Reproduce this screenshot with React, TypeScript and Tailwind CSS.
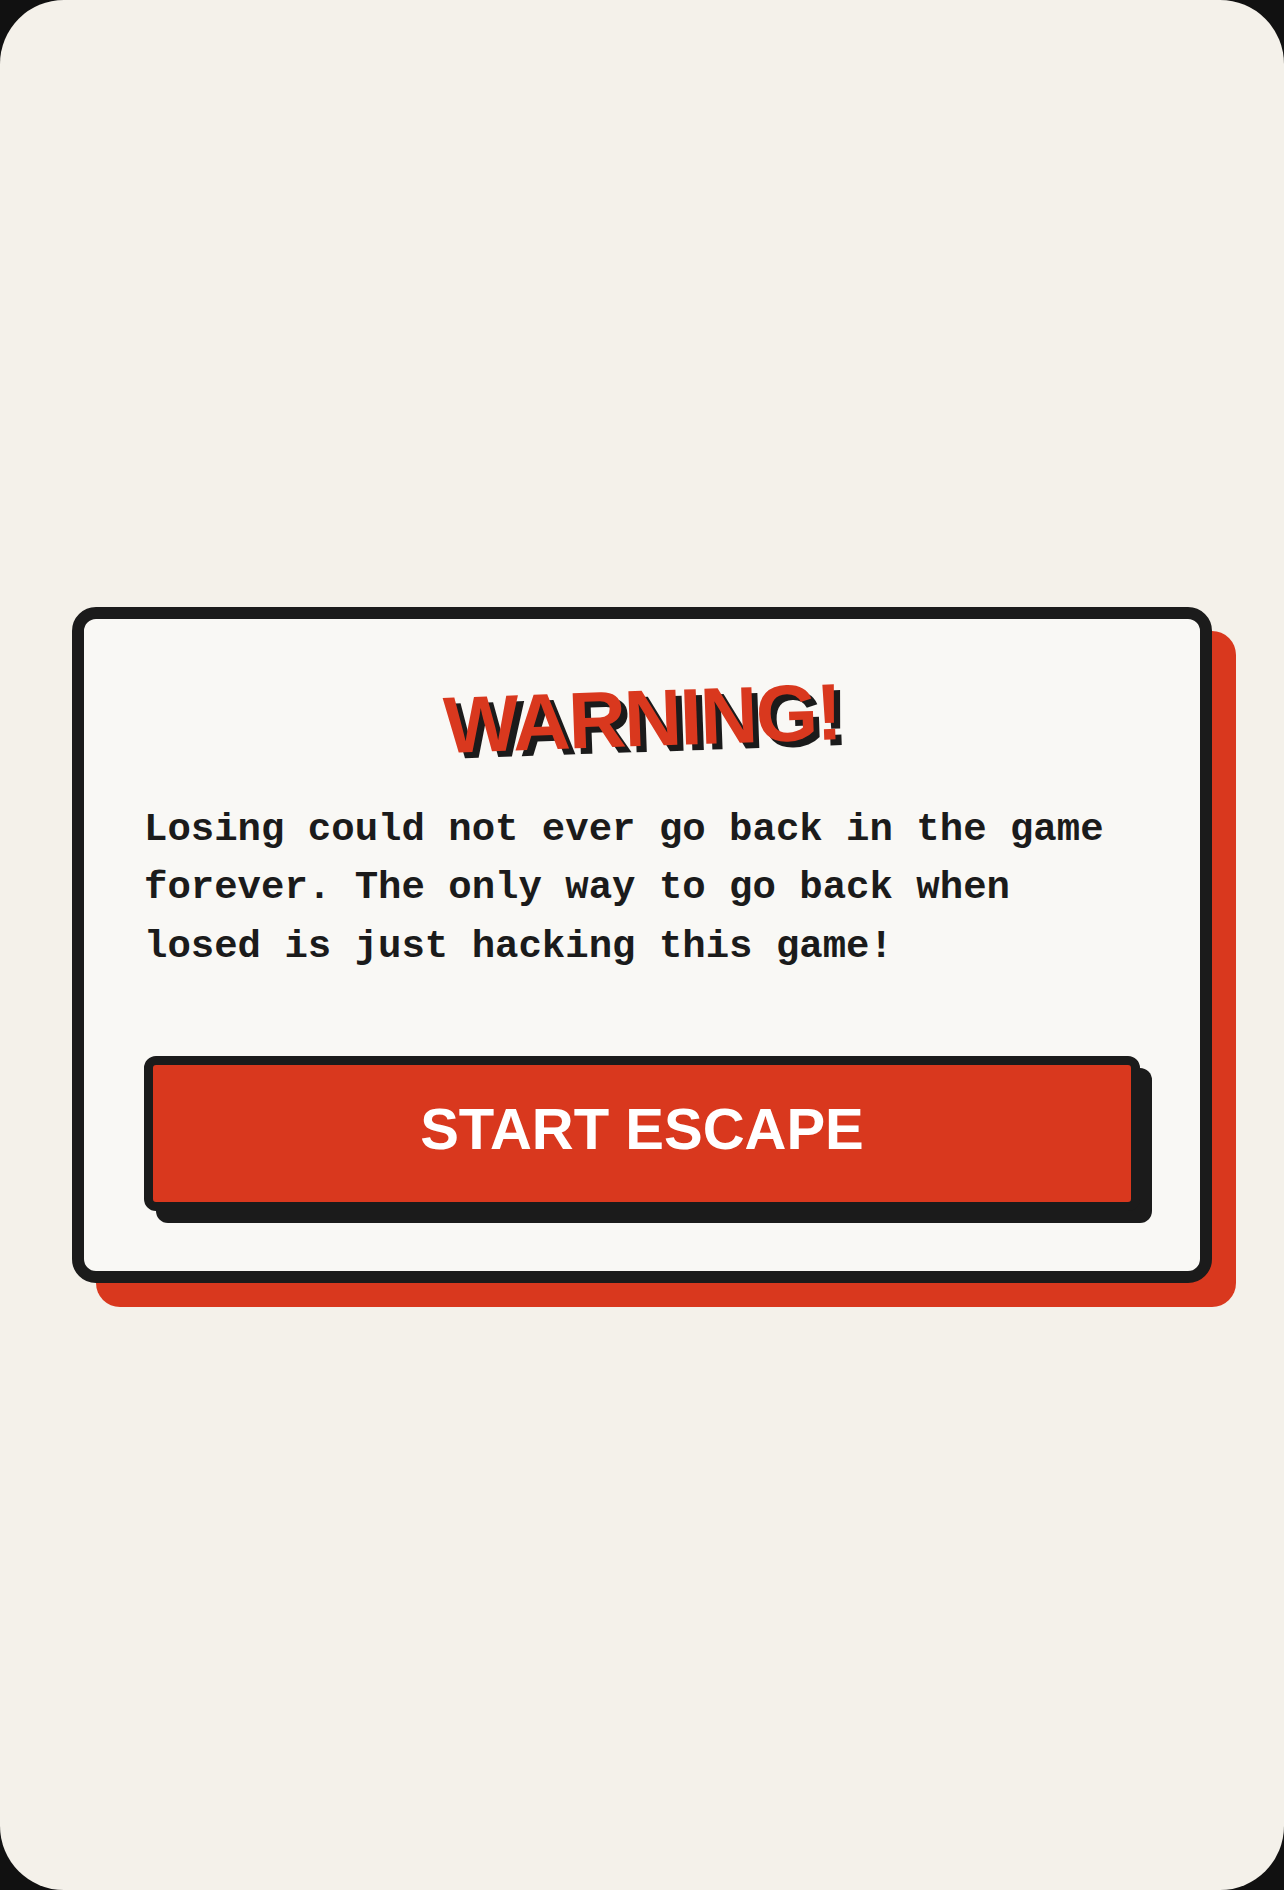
export default function App() {
  return (
    <div className="w-full h-[1890px] bg-[#111111]">
      <div className="h-full rounded-[64px] bg-[#f4f1ea] flex items-center justify-center px-[72px]">
        <div className="w-full rounded-[24px] border-[12px] border-[#1b1b1b] bg-[#f9f8f5] shadow-[24px_24px_0_#d9381e] px-[60px] pt-[52px] pb-[60px]">
          <h1 className="text-center font-['Liberation_Sans',Arial,sans-serif] font-bold text-[80px] leading-[1.2] tracking-[-2px] text-[#d9381e] -rotate-2 [text-shadow:6px_6px_0_#1b1b1b]">
            WARNING!
          </h1>
          <p className="mt-[34px] mb-[80px] font-['Liberation_Mono','Courier_New',monospace] font-bold text-[39px] leading-[1.5] text-[#1b1b1b]">
            Losing could not ever go back in the game forever. The only way to go back when losed is just hacking this game!
          </p>
          <button className="w-full rounded-[12px] border-[9px] border-[#1b1b1b] bg-[#d9381e] shadow-[12px_12px_0_#1b1b1b] pt-[31px] pb-[39px] font-['Liberation_Sans',Arial,sans-serif] font-bold text-[58px] leading-[1.15] text-white">
            START ESCAPE
          </button>
        </div>
      </div>
    </div>
  );
}
